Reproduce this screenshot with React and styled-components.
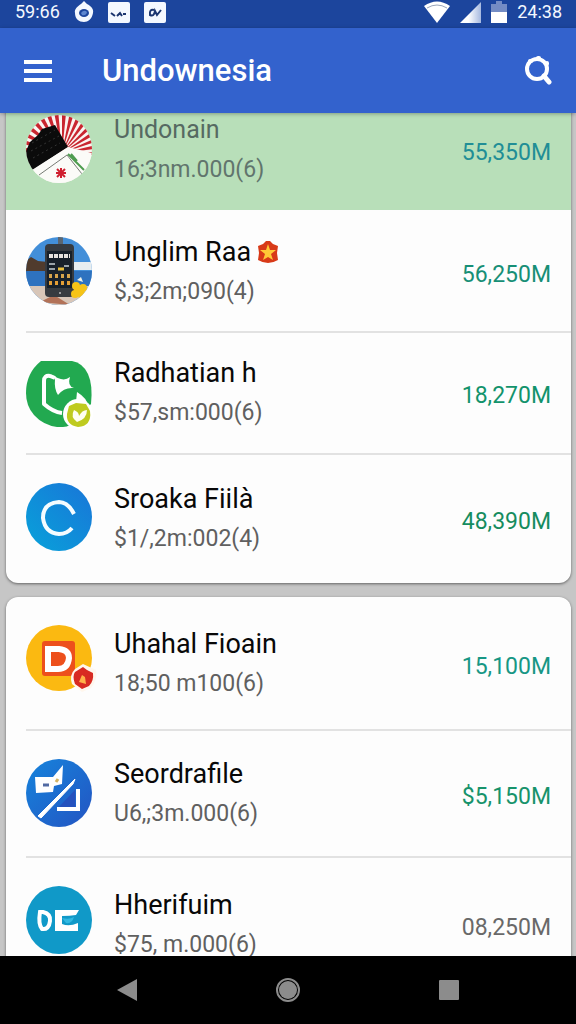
import React from 'react';
import styled, { createGlobalStyle } from 'styled-components';

const GlobalStyle = createGlobalStyle`
    * {
        box-sizing: border-box;
    }

    body {
        margin: 0;
        background: #c6c6c6;
        font-family: Roboto, 'Liberation Sans', sans-serif;
    }
`;

const Screen = styled.div`
    display: flex;
    flex-direction: column;
    height: 100vh;
    overflow: hidden;
`;

const StatusBar = styled.div`
    display: flex;
    flex: none;
    align-items: center;
    justify-content: space-between;
    height: 28px;
    padding: 0 14px 4px 15px;
    background: #1c459d;
    color: #f4f8ff;
`;

const StatusGroup = styled.div`
    display: flex;
    align-items: center;
    gap: ${props => props.$gap}px;
`;

const Clock = styled.span`
    font-size: 18px;
    line-height: 24px;
`;

const AppBar = styled.header`
    position: relative;
    z-index: 1;
    display: flex;
    flex: none;
    align-items: center;
    height: 85px;
    padding: 0 20px;
    background: #3362cd;
    color: #fff;
    box-shadow: 0 1px 4px rgba(0, 0, 0, 0.3);
`;

const IconButton = styled.button`
    display: flex;
    align-items: center;
    justify-content: center;
    width: 36px;
    height: 40px;
    padding: 0;
    border: 0;
    background: none;
    color: inherit;
    cursor: pointer;
`;

const Title = styled.h1`
    flex: 1;
    margin: 0 0 0 46px;
    font-size: 31px;
    font-weight: 500;
    line-height: 40px;
`;

const Content = styled.main`
    flex: 1;
    min-height: 0;
    overflow: hidden;
    padding: 0 5px 0 6px;
`;

const Feed = styled.div`
    display: flex;
    flex-direction: column;
    gap: 14px;
    margin-top: -25px;
`;

const Card = styled.ul`
    margin: 0;
    padding: 0;
    list-style: none;
    overflow: hidden;
    border-radius: 12px;
    background: #fdfdfd;
    box-shadow: 0 1px 3px rgba(0, 0, 0, 0.5);
`;

const Item = styled.li`
    padding-left: 20px;
    background: ${props => (props.$active ? '#b8dfb9' : 'transparent')};
`;

const Row = styled.div`
    display: flex;
    align-items: center;
    gap: 22px;
    height: ${props => props.$height}px;
    padding-right: 20px;
    border-top: 2px solid ${props => (props.$divided ? '#e2e2e2' : 'transparent')};
`;

const Avatar = styled.div`
    align-self: flex-start;
    flex: none;
    width: 66px;
    height: 68px;
    margin-top: ${props => (props.$divided ? 28 : 25)}px;

    svg {
        display: block;
        width: 100%;
        height: 100%;
        overflow: visible;
    }
`;

const Info = styled.div`
    flex: 1;
    min-width: 0;
    white-space: nowrap;
`;

const Name = styled.div`
    display: flex;
    align-items: center;
    gap: 6px;
    color: ${props => (props.$muted ? '#566a62' : '#080808')};
    font-size: ${props => (props.$muted ? 25 : 27)}px;
    line-height: 40px;
`;

const Detail = styled.div`
    color: ${props => (props.$muted ? '#61756d' : '#606060')};
    font-size: 23px;
    line-height: 40px;
`;

const Amount = styled.div`
    padding-top: 6px;
    color: ${props => props.$color};
    font-size: 23px;
    line-height: 28px;
`;

const NavBar = styled.nav`
    display: flex;
    flex: none;
    align-items: center;
    justify-content: center;
    gap: 125px;
    height: 68px;
    background: #000;
    color: #8c8c8c;
`;

const DropIcon = () => (
    <svg width="20" height="22" viewBox="0 0 20 22">
        <path d="M10 0 L13 3 C17 5 20 8 19 12 C18 18 14 21 10 21 C5 21 1 18 1 12 C0 8 4 5 7 3Z" fill="#f4f8ff" />
        <ellipse cx="10" cy="12" rx="5" ry="4" fill="#1c459d" />
        <path d="M7 12 Q10 8 13 11 Q12 15 8 14Z" fill="#5d86cf" />
    </svg>
);

const TileIcon = ({ children }) => (
    <svg width="22" height="21" viewBox="0 0 22 21">
        <rect width="22" height="21" rx="2" fill="#f4f8ff" />
        <g fill="none" stroke="#1b356f" strokeWidth="2">{children}</g>
    </svg>
);

const WifiIcon = () => (
    <svg width="26" height="22" viewBox="0 0 26 22">
        <path d="M0 5 Q13 -4 26 5 L13 22Z" fill="#fff" />
        <path d="M3 7 Q13 1 23 7" fill="none" stroke="#9aa6bb" />
    </svg>
);

const SignalIcon = () => (
    <svg width="21" height="21" viewBox="0 0 21 21">
        <defs>
            <linearGradient id="signal">
                <stop offset="0.4" stopColor="#fff" />
                <stop offset="1" stopColor="#a6b9e0" />
            </linearGradient>
        </defs>
        <path d="M21 0 V21 H0Z" fill="url(#signal)" />
    </svg>
);

const BatteryIcon = () => (
    <svg width="16" height="22" viewBox="0 0 16 22">
        <path d="M5 0 H11 V3 H16 V11 H0 V3 H5Z" fill="#748cc4" />
        <path d="M0 11 H16 V22 H0Z" fill="#fff" />
    </svg>
);

const MenuIcon = () => (
    <svg width="28" height="24" viewBox="0 0 28 24" fill="#fff">
        <rect y="1" width="28" height="4" />
        <rect y="10" width="28" height="4" />
        <rect y="19" width="28" height="4" />
    </svg>
);

const SearchIcon = () => (
    <svg width="28" height="30" viewBox="0 0 28 30" fill="none" stroke="#fff" strokeLinecap="round">
        <circle cx="13" cy="13" r="10" strokeWidth="4" />
        <path d="M20 20 L25 26" strokeWidth="5" />
        <path d="M6 5 L7 5 M14 2 L15 2 M23 7 L23 8" strokeWidth="4" />
    </svg>
);

const FlagAvatar = () => (
    <svg viewBox="0 0 66 68">
        <clipPath id="flagClip"><ellipse cx="33" cy="34" rx="33" ry="34" /></clipPath>
        <g clipPath="url(#flagClip)">
            <rect width="66" height="68" fill="#fbf4f1" />
            {Array.from({ length: 17 }, (_, i) => {
                const from = (182 + i * 11) * Math.PI / 180;
                const to = from + 0.1;
                return (
                    <path
                        key={i}
                        d={`M36 38 L${36 + 60 * Math.cos(from)} ${38 + 60 * Math.sin(from)} L${36 + 60 * Math.cos(to)} ${38 + 60 * Math.sin(to)}Z`}
                        fill="#c9252f"
                    />
                );
            })}
            <path d="M0 36 L4 27 L12 20 L16 14 L29 10 L42 32 L7 55 L0 52Z" fill="#0b0b0b" />
            <path d="M6 28 L29 15 M5 36 L33 21 M7 43 L34 28" stroke="#343434" strokeWidth="1" strokeDasharray="2 3" />
            <path d="M6 55 L42 32 L66 38 V68 H10Z" fill="#fbfbf8" />
            <path d="M13 60 L41 40 L56 59" fill="none" stroke="#767b74" strokeWidth="1" />
            <path d="M42 39 L58 55 M45 39 L51 46" stroke="#4e9c50" strokeWidth="2" />
            <path d="M35 53 V63 M30 58 H40 M31 54 L39 62 M39 54 L31 62" stroke="#cf2030" strokeWidth="2" />
        </g>
    </svg>
);

const PhoneAvatar = () => (
    <svg viewBox="0 0 66 68">
        <clipPath id="phoneClip"><ellipse cx="33" cy="34" rx="33" ry="34" /></clipPath>
        <g clipPath="url(#phoneClip)">
            <rect width="66" height="68" fill="#438fd9" />
            <path d="M0 24 L5 20 L12 24 L22 25 V35 H0Z" fill="#503b2d" />
            <rect x="46" y="25" width="20" height="8" fill="#e7edf0" />
            <rect y="34" width="66" height="15" fill="#2e72bf" />
            <path d="M0 49 H66 V68 H0Z" fill="#d8c6b8" />
            <path d="M14 65 L28 58 L44 68Z" fill="#b27258" />
            <path d="M32 0 H37 V8 H32Z" fill="#5b6671" />
            <rect x="19" y="7" width="29" height="53" rx="4" fill="#373b40" />
            <rect x="21" y="14" width="25" height="37" fill="#17202a" />
            <path d="M23 19 H44" stroke="#e7e3df" strokeWidth="4" strokeDasharray="4 1" />
            <path d="M23 27 H29 M23 32 H29 M38 29 H43" stroke="#9aa4aa" strokeWidth="2" />
            <path d="M32 32 H38" stroke="#e7bd3b" strokeWidth="3" />
            <path d="M23 39 H44" stroke="#d5a34b" strokeWidth="4" strokeDasharray="3 3" />
            <path d="M23 46 H44" stroke="#e49e35" strokeWidth="4" strokeDasharray="3 3" />
            <circle cx="34" cy="56" r="1" fill="#bbb" />
            <g fill="#f6c418">
                <circle cx="50" cy="49" r="4" /><circle cx="57" cy="51" r="4" />
                <circle cx="49" cy="57" r="4" /><circle cx="56" cy="58" r="4" />
                <circle cx="53" cy="53" r="5" />
            </g>
            <path d="M51 43 L55 40 L57 45" fill="#eef1e7" />
        </g>
    </svg>
);

const GreenAvatar = () => (
    <svg viewBox="0 0 66 68">
        <path d="M15 0 H46 Q57 2 62 13 Q67 24 65 43 L44 64 Q41 66 37 66 H31 Q17 64 8 54 Q0 45 0 32 Q0 12 15 0Z" fill="#22a950" />
        <path d="M36 52 Q27 51 18 43 V20 Q18 14 24 15 L29 17" fill="none" stroke="#fff" strokeWidth="4" strokeLinejoin="round" />
        <path d="M25 13 Q37 22 44 16 Q41 25 48 27 Q38 26 32 34 Q28 28 29 18Z" fill="#fff" />
        <path d="M51 31 Q61 37 62 45 L50 41Z" fill="#fff" />
        <circle cx="52" cy="53" r="15" fill="#fff" />
        <path d="M43 45 L50 42 L60 43 L64 50 Q66 65 52 66 Q40 64 41 53Z" fill="#bfcb20" />
        <path d="M51 61 Q44 56 48 49 Q53 51 53 55 Q56 49 61 49 Q61 58 51 61Z" fill="#fffff2" />
    </svg>
);

const CurveAvatar = () => (
    <svg viewBox="0 0 66 68">
        <defs>
            <linearGradient id="curve" x1="0" y1="1" x2="1" y2="0">
                <stop stopColor="#08a2da" />
                <stop offset="1" stopColor="#1975d8" />
            </linearGradient>
        </defs>
        <ellipse cx="33" cy="34" rx="33" ry="34" fill="url(#curve)" />
        <path d="M48 31 Q42 19 33 19 Q17 20 17 35 Q19 50 33 51 Q41 51 46 45" fill="none" stroke="#f5fcff" strokeWidth="4" />
    </svg>
);

const LetterAvatar = () => (
    <svg viewBox="0 0 66 68">
        <circle cx="33" cy="34" r="33" fill="#fbb911" />
        <rect x="16" y="17" width="33" height="35" rx="3" fill="#ed501c" />
        <path d="M22 25 H33 Q43 26 43 34 Q42 45 32 45 H22Z" fill="none" stroke="#fff" strokeWidth="6" />
        <path d="M57 40 L70 46 Q72 55 65 64 L56 68 L46 60 Q43 51 49 45Z" fill="#fff7ed" />
        <path d="M57 43 L61 46 L67 49 Q68 57 63 62 L56 65 L49 60 Q46 52 49 48Z" fill="#d82b22" />
        <path d="M56 51 L59 53 L60 60 L53 58Z" fill="#ffb24a" />
    </svg>
);

const SlashAvatar = () => (
    <svg viewBox="0 0 66 68">
        <defs>
            <linearGradient id="slash" x1="0" y1="0" x2="1" y2="1">
                <stop stopColor="#1684dc" />
                <stop offset="1" stopColor="#2354c2" />
            </linearGradient>
        </defs>
        <ellipse cx="33" cy="34" rx="33" ry="34" fill="url(#slash)" />
        <path d="M9 18 H27 L37 6 L36 25 L28 27 L27 33 L10 34Z" fill="#fff" />
        <path d="M17 26 H23" stroke="#526aa2" strokeWidth="3" />
        <path d="M30 23 L32 20" stroke="#d3b363" strokeWidth="3" />
        <path d="M12 57 L49 20 L47 25 L15 59Z" fill="#fff" stroke="#fff" strokeWidth="1" />
        <path d="M31 50 L49 31 L49 49Z" fill="#2551bd" />
        <path d="M52 30 V50 H31" fill="none" stroke="#fff" strokeWidth="4" />
    </svg>
);

const TealAvatar = () => (
    <svg viewBox="0 0 66 68">
        <ellipse cx="33" cy="34" rx="33" ry="34" fill="#1099c8" />
        <path d="M14 26 H17 Q25 28 24 35 Q23 44 16 43 Q12 38 14 26Z" fill="none" stroke="#fff" strokeWidth="4" />
        <path d="M29 24 H53 L50 29 Q44 30 36 30 V38 Q43 41 52 37 V45 H29Z" fill="#fff" />
        <path d="M36 32 Q43 34 48 31 Q46 38 40 37Z" fill="#31b8e1" />
    </svg>
);

const StarBadge = () => (
    <svg width="22" height="24" viewBox="0 0 22 24">
        <path d="M9 1 H13 L16 4 L21 6 L20 13 L21 20 Q16 23 11 23 Q6 23 1 20 L2 13 L1 6 L6 4Z" fill="#d83a18" />
        <path d="M11 4 L13 10 L19 10 L14 14 L16 20 L11 17 L6 20 L8 14 L3 10 L9 10Z" fill="#ffc936" />
    </svg>
);

const BackIcon = () => (
    <svg width="20" height="22" viewBox="0 0 20 22">
        <path d="M20 0 V22 L0 11Z" fill="currentColor" />
    </svg>
);

const HomeIcon = () => (
    <svg width="24" height="24" viewBox="0 0 24 24">
        <circle cx="12" cy="12" r="11" fill="none" stroke="currentColor" strokeWidth="2" />
        <circle cx="12" cy="12" r="9" fill="currentColor" />
    </svg>
);

const RecentIcon = () => (
    <svg width="20" height="20" viewBox="0 0 20 20">
        <rect width="20" height="20" rx="1" fill="currentColor" />
    </svg>
);

const groups = [
    [
        { name: 'Undonain', detail: '16;3nm.000(6)', amount: '55,350M', color: '#218e96', icon: FlagAvatar, height: 122, active: true },
        { name: 'Unglim Raa', detail: '$,3;2m;090(4)', amount: '56,250M', color: '#178f76', icon: PhoneAvatar, height: 121, badge: true },
        { name: 'Radhatian h', detail: '$57,sm:000(6)', amount: '18,270M', color: '#12936c', icon: GreenAvatar, height: 122, divided: true },
        { name: 'Sroaka Fiilà', detail: '$1/,2m:002(4)', amount: '48,390M', color: '#168c5f', icon: CurveAvatar, height: 130, divided: true },
    ],
    [
        { name: 'Uhahal Fioain', detail: '18;50 m100(6)', amount: '15,100M', color: '#179785', icon: LetterAvatar, height: 132 },
        { name: 'Seordrafile', detail: 'U6,;3m.000(6)', amount: '$5,150M', color: '#17936b', icon: SlashAvatar, height: 127, divided: true },
        { name: 'Hherifuim', detail: '$75, m.000(6)', amount: '08,250M', color: '#696969', icon: TealAvatar, height: 135, divided: true },
    ],
];

const Entry = ({ entry }) => {
    const Icon = entry.icon;

    return (
        <Item $active={entry.active}>
            <Row $height={entry.height} $divided={entry.divided}>
                <Avatar $divided={entry.divided}><Icon /></Avatar>
                <Info>
                    <Name $muted={entry.active}>
                        {entry.name}
                        {entry.badge && <StarBadge />}
                    </Name>
                    <Detail $muted={entry.active}>{entry.detail}</Detail>
                </Info>
                <Amount $color={entry.color}>{entry.amount}</Amount>
            </Row>
        </Item>
    );
};

export default function App() {
    return (
        <Screen>
            <GlobalStyle />
            <StatusBar>
                <StatusGroup $gap={14}>
                    <Clock>59:66</Clock>
                    <DropIcon />
                    <TileIcon><path d="M3 11 L7 14 M9 14 L12 11 L14 14 M15 12 H18" /></TileIcon>
                    <TileIcon><path d="M10 8 Q5 7 6 13 Q10 15 11 9 L13 13 L17 8" /></TileIcon>
                </StatusGroup>
                <StatusGroup $gap={10}>
                    <WifiIcon />
                    <SignalIcon />
                    <BatteryIcon />
                    <Clock>24:38</Clock>
                </StatusGroup>
            </StatusBar>
            <AppBar>
                <IconButton aria-label="Menu"><MenuIcon /></IconButton>
                <Title>Undownesia</Title>
                <IconButton aria-label="Search"><SearchIcon /></IconButton>
            </AppBar>
            <Content>
                <Feed>
                    {groups.map((group, index) => (
                        <Card key={index}>
                            {group.map(entry => <Entry key={entry.name} entry={entry} />)}
                        </Card>
                    ))}
                </Feed>
            </Content>
            <NavBar>
                <IconButton aria-label="Back"><BackIcon /></IconButton>
                <IconButton aria-label="Home"><HomeIcon /></IconButton>
                <IconButton aria-label="Recent apps"><RecentIcon /></IconButton>
            </NavBar>
        </Screen>
    );
}
